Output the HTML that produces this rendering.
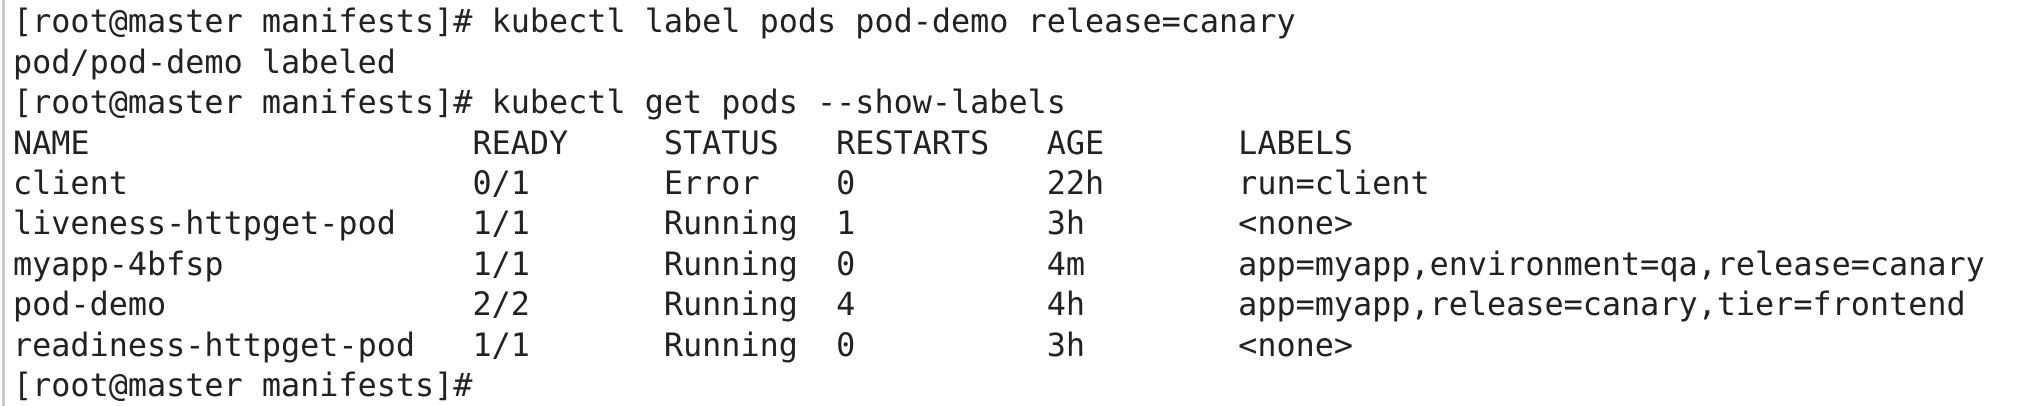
<!DOCTYPE html>
<html><head><meta charset="utf-8"><style>
html,body{margin:0;padding:0;background:#fff;width:2034px;height:406px;overflow:hidden;position:relative}
.bar{position:absolute;left:2px;top:0;width:3px;height:406px;background:#c8c8c8}
pre{position:absolute;left:13px;top:-38px;margin:0;font-family:"DejaVu Sans Mono","Liberation Mono",monospace;font-size:31.8px;line-height:40.4px;color:#222}
</style></head><body>
<div class="bar"></div>
<pre>             g p
[root@master manifests]# kubectl label pods pod-demo release=canary
pod/pod-demo labeled
[root@master manifests]# kubectl get pods --show-labels
NAME                    READY     STATUS   RESTARTS   AGE       LABELS
client                  0/1       Error    0          22h       run=client
liveness-httpget-pod    1/1       Running  1          3h        &lt;none&gt;
myapp-4bfsp             1/1       Running  0          4m        app=myapp,environment=qa,release=canary
pod-demo                2/2       Running  4          4h        app=myapp,release=canary,tier=frontend
readiness-httpget-pod   1/1       Running  0          3h        &lt;none&gt;
[root@master manifests]#</pre>
</body></html>
